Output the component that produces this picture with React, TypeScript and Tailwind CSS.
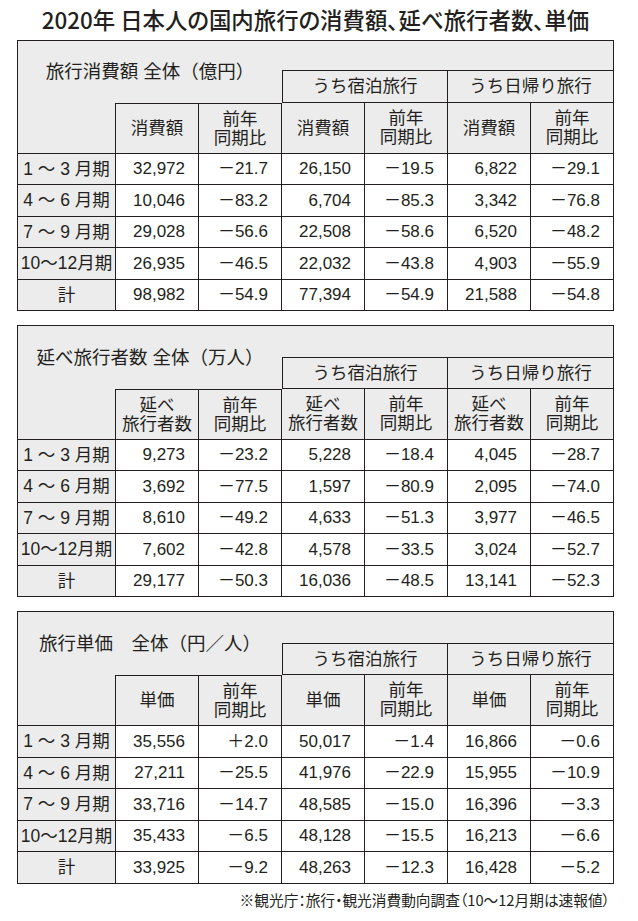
type Row = { label: string; values: string[] };

type TableProps = {
  title: string;
  headA: string[];
  headB: string[];
  rows: Row[];
  gridRows: string;
};

const line = "border-[#231f20]";
const grey = "bg-[#ececec]";

const labels = ["1 ～ 3 月期", "4 ～ 6 月期", "7 ～ 9 月期", "10～12月期", "計"];

const mk = (data: string[][]): Row[] =>
  data.map((values, i) => ({ label: labels[i], values }));

const spend = mk([
  ["32,972", "－21.7", "26,150", "－19.5", "6,822", "－29.1"],
  ["10,046", "－83.2", "6,704", "－85.3", "3,342", "－76.8"],
  ["29,028", "－56.6", "22,508", "－58.6", "6,520", "－48.2"],
  ["26,935", "－46.5", "22,032", "－43.8", "4,903", "－55.9"],
  ["98,982", "－54.9", "77,394", "－54.9", "21,588", "－54.8"],
]);

const travelers = mk([
  ["9,273", "－23.2", "5,228", "－18.4", "4,045", "－28.7"],
  ["3,692", "－77.5", "1,597", "－80.9", "2,095", "－74.0"],
  ["8,610", "－49.2", "4,633", "－51.3", "3,977", "－46.5"],
  ["7,602", "－42.8", "4,578", "－33.5", "3,024", "－52.7"],
  ["29,177", "－50.3", "16,036", "－48.5", "13,141", "－52.3"],
]);

const unit = mk([
  ["35,556", "＋2.0", "50,017", "－1.4", "16,866", "－0.6"],
  ["27,211", "－25.5", "41,976", "－22.9", "15,955", "－10.9"],
  ["33,716", "－14.7", "48,585", "－15.0", "16,396", "－3.3"],
  ["35,433", "－6.5", "48,128", "－15.5", "16,213", "－6.6"],
  ["33,925", "－9.2", "48,263", "－12.3", "16,428", "－5.2"],
]);

const HeadCell = ({ text, extra }: { text: string; extra: string }) => (
  <div
    className={`${grey} ${line} ${extra} flex items-center justify-center text-center text-[17.5px] leading-[19px] whitespace-pre`}
  >
    {text}
  </div>
);

const StatTable = ({ title, headA, headB, rows, gridRows }: TableProps) => {
  const heads = [headA[0], headA[1], headB[0], headB[1], headB[0], headB[1]];
  return (
    <div className={`grid w-fit grid-cols-[98px_repeat(6,83px)] border-t border-l ${line} ${gridRows}`}>
      {/* title block */}
      <div className={`col-span-3 row-span-2 ${grey} flex items-center justify-center text-[18.5px]`}>
        {title}
      </div>
      <div className={`col-span-4 ${grey} border-r border-b ${line}`} />
      <div className={`col-span-2 ${grey} border-l border-r border-b ${line} flex items-center justify-center text-[17.5px]`}>
        うち宿泊旅行
      </div>
      <div className={`col-span-2 ${grey} border-r border-b ${line} flex items-center justify-center text-[17.5px]`}>
        うち日帰り旅行
      </div>

      {/* column heads */}
      <div className={`${grey} border-r border-b ${line}`} />
      {heads.map((h, i) => (
        <HeadCell key={i} text={h} extra={i < 2 ? "border-t border-r border-b" : "border-r border-b"} />
      ))}

      {/* data */}
      {rows.map((r) => (
        <div key={r.label} className="contents">
          <div className={`${grey} border-r border-b ${line} flex items-center justify-center text-[17.5px] whitespace-pre`}>
            {r.label}
          </div>
          {r.values.map((v, j) => (
            <div
              key={j}
              className={`bg-white border-r border-b ${line} flex items-center justify-end pr-[13px] text-[17px]`}
            >
              {v}
            </div>
          ))}
        </div>
      ))}
    </div>
  );
};

export default function App() {
  return (
    <div className="w-[638px] min-h-[921px] bg-white text-[#231f20] font-['Liberation_Sans','Noto_Sans_CJK_JP',sans-serif]">
      <div className="ml-[17px] w-fit">
        <div className="h-[40px] flex items-center justify-center text-[22.4px] font-medium [font-feature-settings:'palt'] font-['Noto_Sans_CJK_JP',sans-serif]">
          2020年 日本人の国内旅行の消費額、延べ旅行者数、単価
        </div>

        <StatTable
          title="旅行消費額 全体（億円）"
          headA={["消費額", "前年\n同期比"]}
          headB={["消費額", "前年\n同期比"]}
          rows={spend}
          gridRows="grid-rows-[30px_32px_51px_31px_32px_31px_32px_31px]"
        />

        <div className="mt-[14px]">
          <StatTable
            title="延べ旅行者数 全体（万人）"
            headA={["延べ\n旅行者数", "前年\n同期比"]}
            headB={["延べ\n旅行者数", "前年\n同期比"]}
            rows={travelers}
            gridRows="grid-rows-[32px_31px_51px_31px_32px_31px_32px_31px]"
          />
        </div>

        <div className="mt-[14px]">
          <StatTable
            title="旅行単価　全体（円／人）"
            headA={["単価", "前年\n同期比"]}
            headB={["単価", "前年\n同期比"]}
            rows={unit}
            gridRows="grid-rows-[32px_31px_51px_32px_31px_32px_31px_32px]"
          />
        </div>

        <div className="mt-[6px] text-right pr-[4px] text-[14.7px] leading-[20px] [font-feature-settings:'palt'] font-['Noto_Sans_CJK_JP',sans-serif]">
          ※観光庁：旅行・観光消費動向調査（10～12月期は速報値）
        </div>
      </div>
    </div>
  );
}
